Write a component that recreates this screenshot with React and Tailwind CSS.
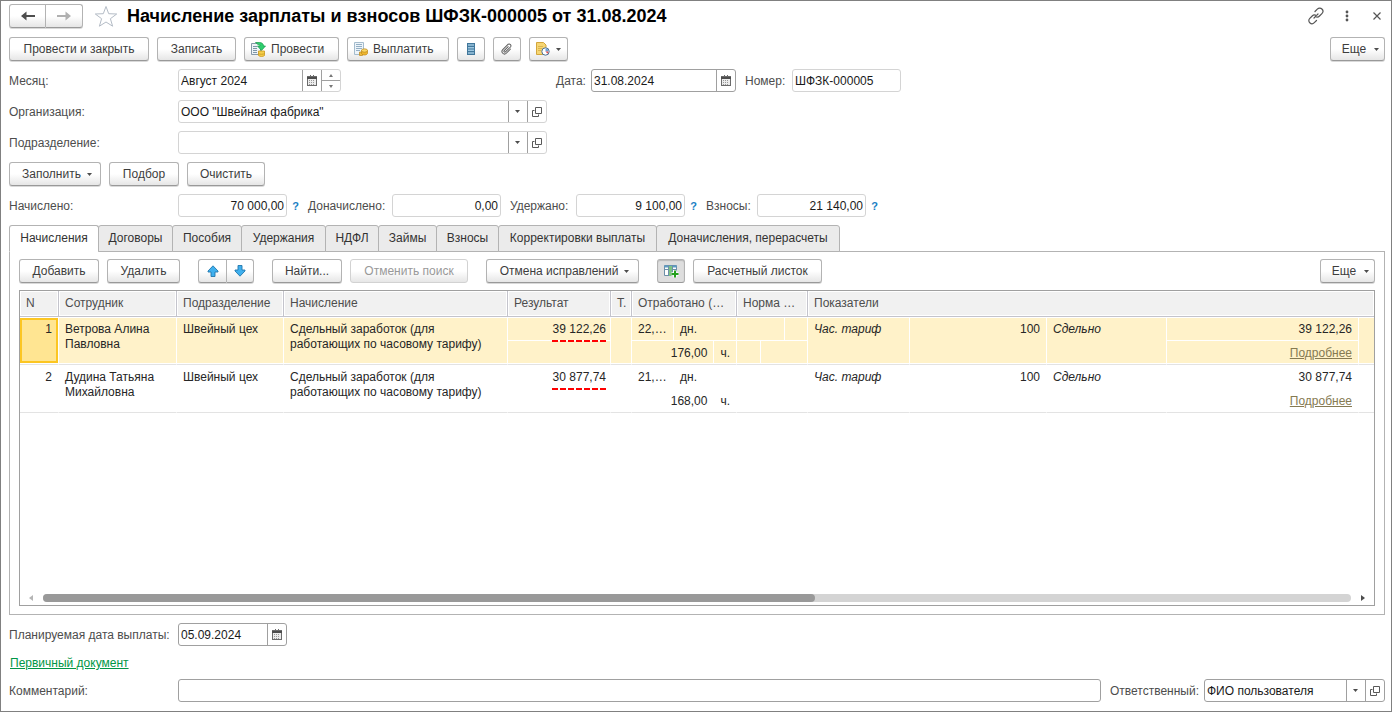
import React, { useState } from 'react';
import clsx from 'clsx';

const tabs = [
  { id: 'accruals', label: 'Начисления', width: 'w-[90px]' },
  { id: 'contracts', label: 'Договоры', width: 'w-[75px]' },
  { id: 'benefits', label: 'Пособия', width: 'w-[70px]' },
  { id: 'deductions', label: 'Удержания', width: 'w-[85px]' },
  { id: 'ndfl', label: 'НДФЛ', width: 'w-[54px]' },
  { id: 'loans', label: 'Займы', width: 'w-[59px]' },
  { id: 'fees', label: 'Взносы', width: 'w-[63px]' },
  { id: 'corrections', label: 'Корректировки выплаты', width: 'w-[159px]' },
  { id: 'recalc', label: 'Доначисления, перерасчеты', width: 'w-[184px]' }
];

const rows = [
  {
    id: 1,
    employee: 'Ветрова Алина Павловна',
    department: 'Швейный цех',
    accrual: 'Сдельный заработок (для работающих по часовому тарифу)',
    result: '39 122,26',
    days: '22,…',
    hours: '176,00',
    rate: '100'
  },
  {
    id: 2,
    employee: 'Дудина Татьяна Михайловна',
    department: 'Швейный цех',
    accrual: 'Сдельный заработок (для работающих по часовому тарифу)',
    result: '30 877,74',
    days: '21,…',
    hours: '168,00',
    rate: '100'
  }
];

/* Icons */
const CaretIcon = () => (
  <svg width="5" height="3" viewBox="0 0 5 3" className="shrink-0">
    <path d="M0 0h5L2.5 3z" fill="#4d4d4d" />
  </svg>
);

const ArrowIcon = ({ color, flip }) => (
  <svg width="14" height="10" viewBox="0 0 14 10" className={flip ? 'rotate-180' : ''}>
    <path d="M0 5L5.5 0.5V4H14V6H5.5V9.5z" fill={color} />
  </svg>
);

const StarIcon = () => (
  <svg width="24" height="23" viewBox="0 0 24 23" fill="none" stroke="#b4bcc6">
    <path d="M12 1.5l2.7 7.2 8 .3-6.3 4.7 2.2 7.5L12 17l-6.6 4.2 2.2-7.5L1.3 9l8-.3z" />
  </svg>
);

const LinkIcon = () => (
  <svg width="18" height="18" viewBox="0 0 18 18" fill="none" stroke="#555" strokeWidth="1.2" strokeLinecap="round">
    <path d="M8 4.5l2.3-2.3c1.4-1.4 3.4-1.4 4.6-.2 1.3 1.3 1.3 3.3 0 4.600L12.500 9c-1.200 1.200-2.800 1.300-4 .4" />
    <path d="M9.500 13.500l-2.200 2.200c-1.300 1.300-3.200 1.300-4.500.1-1.300-1.300-1.300-3.200 0-4.500L5.200 9c1.200-1.200 2.800-1.300 4-.4" />
    <path d="M7 11l4-4" strokeDasharray="2 2" />
  </svg>
);

const CalendarIcon = () => (
  <svg width="10" height="11" viewBox="0 0 10 11">
    <path d="M1 1h2V0h1v1h2V0h1v1h3v10H0V1z" fill="#6b6b6b" />
    <path d="M0 2h10v2H0z" fill="#4d4d4d" />
    <path d="M1 4h8v6H1z" fill="#ececec" />
    <path d="M2 5.500h6M2 7.500h6M2 9.500h6" stroke="#999" strokeDasharray="1 1" />
  </svg>
);

const OpenIcon = () => (
  <svg width="10" height="10" viewBox="0 0 10 10" fill="none" stroke="#595959">
    <path d="M3.500 .5h6v6h-6z" />
    <path d="M2.500 3.500h-2v6h6v-2" />
  </svg>
);

const PostIcon = () => (
  <svg width="15" height="15" viewBox="0 0 15 15" className="shrink-0">
    <path d="M.5 1.500h9v11h-9z" fill="#eef3f7" stroke="#8699a8" />
    <path d="M2 4.500h4M2 6.500h4M2 8.500h4M2 10.500h4" stroke="#7d96a8" />
    <path d="M4.500 .5h4c2.500 0 4 1.500 4 3.500h2L10.500 8.500 6.500 4h2.500c0-1-1-1.500-2-1.500z" fill="#2fce6e" stroke="#159a4b" strokeWidth=".7" />
    <path d="M7.500 9v4.500c1 1.300 5 1.300 6 0V9z" fill="#f5cf4c" stroke="#c9971c" strokeWidth=".8" />
    <path d="M7.500 11.500c1 1 5 1 6 0" fill="none" stroke="#c9971c" strokeWidth=".8" />
  </svg>
);

const PayIcon = () => (
  <svg width="14" height="14" viewBox="0 0 14 14" className="shrink-0">
    <path d="M.5 .5h9v12h-9z" fill="#edf4fa" stroke="#a5bccd" />
    <path d="M2 2.500h6M2 4.500h6M2 6.500h6M2 8.500h4" stroke="#93afc4" />
    <path d="M5.500 10h3v3.500h-3z" fill="#f0bd3c" stroke="#bd861a" strokeWidth=".7" />
    <path d="M7.500 8.500v3c1 2 5 2 6 0v-3z" fill="#eeb62f" stroke="#bd861a" strokeWidth=".7" />
    <ellipse cx="10.500" cy="8.500" rx="3" ry="1.700" fill="#f9d768" stroke="#bd861a" strokeWidth=".7" />
  </svg>
);

const RegisterIcon = () => (
  <svg width="8" height="12" viewBox="0 0 8 12">
    <path d="M0 0h8v12H0z" fill="#41779b" />
    <path d="M1 2h6M1 4.700h6M1 7.300h6M1 10h6" stroke="#9cc6e0" strokeWidth="1.500" />
  </svg>
);

const ClipIcon = () => (
  <svg width="14" height="14" viewBox="0 0 14 14" fill="none" stroke="#5c5c5c" strokeLinecap="round">
    <g transform="rotate(45 7 7)">
      <path d="M9.500 4.500v6a2.500 2.500 0 0 1-5 0V2.800a1.800 1.800 0 0 1 3.500 0v7.400a.9.9 0 0 1-1.800 0V4.500" />
    </g>
  </svg>
);

const ReportIcon = () => (
  <svg width="14" height="14" viewBox="0 0 14 14">
    <path d="M.5 .5h7l2.500 2.500v9.500H.5z" fill="#f6d673" stroke="#d3a63c" />
    <path d="M2 4.500h5M2 6.500h4M2 8.500h3" stroke="#dcb550" />
    <circle cx="9.500" cy="9.500" r="3.700" fill="#fff" stroke="#4a6f94" />
    <path d="M9.500 9.500V6.500a3 3 0 0 1 3 3z" fill="#6da3d6" />
    <path d="M9.500 9.500h3a3 3 0 0 1-1 2.200z" fill="#e04f4f" />
  </svg>
);

const MoveIcon = ({ flip }) => (
  <svg width="12" height="12" viewBox="0 0 12 12" className={flip ? 'rotate-180' : ''}>
    <path d="M6 .8L11 6v1H8v4.500H4V7H1V6z" fill="#3fb0ee" stroke="#2177ad" strokeWidth=".9" />
  </svg>
);

const ColumnsIcon = () => (
  <svg width="15" height="13" viewBox="0 0 15 13">
    <path d="M.5 .5h12v10H.5z" fill="#fff" stroke="#6c8fa8" />
    <path d="M.5 1.500h12" stroke="#5b9bc4" strokeWidth="2" />
    <path d="M4 1h5v10H4z" fill="#7cc383" />
    <path d="M4.500 0v11M8.500 0v11M.5 4.500H4M9 4.500h3" stroke="#6c8fa8" />
    <path d="M11 5.500v7M7.500 9h7" stroke="#fff" strokeWidth="3.500" />
    <path d="M11 5.500v7M7.500 9h7" stroke="#25a01c" strokeWidth="2" />
  </svg>
);

/* Controls */
const Button = ({ width, className, align = 'justify-center', pressed, children, ...props }) => (
  <button
    type="button"
    aria-pressed={pressed}
    className={clsx(
      'flex h-6 shrink-0 items-center rounded-[3px] border border-[#b3b3b3] border-b-[#999] whitespace-nowrap text-[#3d3d3d] disabled:border-[#d2d2d2] disabled:text-[#999] disabled:shadow-none',
      pressed
        ? 'bg-[#dedede] shadow-[inset_0_1px_1px_#bbb]'
        : 'bg-linear-to-b from-white from-50% to-[#e6e6e6] shadow-[0_1px_0_#d9d9d9]',
      align,
      width,
      className
    )}
    {...props}
  >
    {children}
  </button>
);

const MoreButton = () => (
  <Button width="w-[55px]" className="ml-auto gap-2 pl-1.5">
    Еще <CaretIcon />
  </Button>
);

const FieldButton = ({ label, children }) => (
  <button
    type="button"
    aria-label={label}
    className="flex w-[19px] shrink-0 items-center justify-center border-l border-[#a0a0a0] pr-px"
  >
    {children}
  </button>
);

const Field = ({ id, value = '', width, dark, align, readOnly, children }) => (
  <div
    className={clsx(
      'flex h-[23px] overflow-hidden rounded-[3px] border bg-white',
      dark ? 'border-[#a0a0a0]' : 'border-[#d4d4d4]',
      width
    )}
  >
    <input
      id={id}
      type="text"
      defaultValue={value}
      readOnly={readOnly}
      className={clsx('min-w-0 flex-1 px-0.5 pt-0.5 text-[#1a1a1a] outline-none', align === 'right' && 'text-right')}
    />
    {children}
  </div>
);

const Label = ({ htmlFor, width, children }) => (
  <label htmlFor={htmlFor} className={clsx('shrink-0 pt-0.5 whitespace-nowrap', width)}>
    {children}
  </label>
);

const Hint = () => (
  <button type="button" aria-label="Справка" className="w-[21px] pt-px pr-1 text-center text-[11px] font-bold text-[#1a7fc4]">
    ?
  </button>
);

const RefButtons = () => (
  <>
    <FieldButton label="Выбрать из списка"><CaretIcon /></FieldButton>
    <FieldButton label="Открыть"><OpenIcon /></FieldButton>
  </>
);

const HeadCell = ({ children, ...props }) => (
  <th
    className="overflow-hidden border-r border-b border-[#c4c4cc] bg-[#f1f1f1] px-1.5 text-left font-normal whitespace-nowrap shadow-[inset_0_0_0_1px_#fff] last:border-r-0"
    {...props}
  >
    {children}
  </th>
);

const AccrualRow = ({ row, selected, onSelect }) => {
  const cell = 'border-r border-b border-r-white border-b-[#e3e3e3] p-0 align-top last:border-r-0';
  const fill = clsx('my-px h-[45px] px-1.5 pt-1', selected && 'bg-[#fff2c9]');
  const half = clsx('flex', selected ? 'bg-[#fff2c9]' : 'bg-white');
  return (
    <tr onClick={onSelect}>
      <td className={cell}>
        <div
          className={clsx(
            'my-px h-[45px] text-right',
            selected ? 'border-2 border-[#fcc622] bg-[#ffe592] px-1 pt-0.5' : 'px-1.5 pt-1'
          )}
        >
          {row.id}
        </div>
      </td>
      <td className={cell}><div className={fill}>{row.employee}</div></td>
      <td className={cell}><div className={fill}>{row.department}</div></td>
      <td className={cell}><div className={fill}>{row.accrual}</div></td>
      <td className={cell}>
        <div className="my-px flex h-[45px] flex-col gap-px">
          <div className={clsx(half, 'h-[22px] flex-col items-end px-1 pt-1')}>
            <span>{row.result}</span>
            <span className="mt-[3px] h-0.5 w-[54px] shrink-0 bg-[repeating-linear-gradient(90deg,#f00_0_6px,transparent_6px_8px)]" />
          </div>
          {/* transparent on plain rows so the red underline stays whole */}
          <div className={clsx('-z-10 h-[22px]', selected && 'bg-[#fff2c9]')} />
        </div>
      </td>
      <td className={cell}><div className={fill} /></td>
      <td className={cell}>
        <div className="my-px flex h-[45px] flex-col gap-px">
          <div className={clsx(half, 'h-[22px]')}>
            <span className="w-[42px] border-r border-white px-1.5 pt-1">{row.days}</span>
            <span className="px-1.5 pt-1">дн.</span>
          </div>
          <div className={clsx(half, 'h-[22px]')}>
            <span className="w-[84px] border-r border-white px-1.5 pt-[5px] text-right">{row.hours}</span>
            <span className="px-1.5 pt-[5px]">ч.</span>
          </div>
        </div>
      </td>
      <td className={cell}>
        <div className="my-px flex h-[45px] flex-col gap-px">
          <div className={clsx(half, 'h-[22px]')}><span className="w-12 border-r border-white" /></div>
          <div className={clsx(half, 'h-[22px]')}><span className="w-6 border-r border-white" /></div>
        </div>
      </td>
      <td className={cell}><div className={clsx(fill, 'italic')}>Час. тариф</div></td>
      <td className={cell}><div className={clsx(fill, 'text-right')}>{row.rate}</div></td>
      <td className={cell}><div className={clsx(fill, 'italic')}>Сдельно</div></td>
      <td className={cell}>
        <div className="my-px flex h-[45px] flex-col gap-px">
          <div className={clsx(half, 'h-[22px] justify-end px-1.5 pt-1')}>{row.result}</div>
          <div className={clsx(half, 'h-[22px] justify-end px-1.5 pt-[5px]')}>
            <a href="#details" className="text-[#857a52] underline">Подробнее</a>
          </div>
        </div>
      </td>
      <td className={cell}><div className={fill} /></td>
    </tr>
  );
};

const App = () => {
  const [activeTab, setActiveTab] = useState('accruals');
  const [selectedRow, setSelectedRow] = useState(1);

  return (
    <div className="flex min-h-screen flex-col gap-2 border border-[#808080] bg-white pt-0.5 pr-1.5 pb-[9px] pl-2 font-['Liberation_Sans',Arial,sans-serif] text-[12px] leading-[15px] text-[#4d4d4d]">
      {/* Title */}
      <header className="flex h-[26px] items-center">
        <div className="flex">
          <Button width="w-[37px]" className="rounded-r-none" aria-label="Назад"><ArrowIcon color="#4d4d4d" /></Button>
          <Button width="w-[37px]" className="rounded-l-none border-l-0" aria-label="Вперед"><ArrowIcon color="#b0b0b0" flip /></Button>
        </div>
        <button type="button" aria-label="В избранное" className="ml-[11px]"><StarIcon /></button>
        <h1 className="ml-[9px] text-[18px] leading-6 font-bold whitespace-nowrap text-black">
          Начисление зарплаты и взносов ШФЗК-000005 от 31.08.2024
        </h1>
        <div className="ml-auto flex items-center gap-5">
          <button type="button" aria-label="Получить ссылку"><LinkIcon /></button>
          <button type="button" aria-label="Меню">
            <svg width="4" height="12" viewBox="0 0 4 12" fill="#555">
              <circle cx="2" cy="2" r="1.400" /><circle cx="2" cy="6" r="1.400" /><circle cx="2" cy="10" r="1.400" />
            </svg>
          </button>
          <button type="button" aria-label="Закрыть" className="mx-1">
            <svg width="8" height="8" viewBox="0 0 8 8" stroke="#555" strokeWidth="1.200">
              <path d="M.5 .5l7 7M7.500 .5l-7 7" />
            </svg>
          </button>
        </div>
      </header>

      {/* Commands */}
      <div className="flex gap-2">
        <Button width="w-[140px]">Провести и закрыть</Button>
        <Button width="w-[79px]">Записать</Button>
        <Button width="w-[95px]" align="justify-start" className="gap-[5px] pl-1.5"><PostIcon /> Провести</Button>
        <Button width="w-[102px]" align="justify-start" className="gap-[5px] pl-1.5"><PayIcon /> Выплатить</Button>
        <Button width="w-7" aria-label="Движения документа"><RegisterIcon /></Button>
        <Button width="w-7" aria-label="Файлы"><ClipIcon /></Button>
        <Button width="w-[39px]" className="gap-1.5" aria-label="Отчеты"><ReportIcon /><CaretIcon /></Button>
        <MoreButton />
      </div>

      {/* Document fields */}
      <div className="flex items-center">
        <div className="flex w-[547px] items-center">
          <Label htmlFor="month" width="w-[169px]">Месяц:</Label>
          <Field id="month" value="Август 2024" width="w-[163px]">
            <FieldButton label="Выбрать месяц"><CalendarIcon /></FieldButton>
            <div className="flex w-[19px] flex-col border-l border-[#a0a0a0]">
              <button type="button" aria-label="Следующий месяц" className="flex flex-1 items-center justify-center border-b border-[#a0a0a0]">
                <svg width="4" height="3" viewBox="0 0 4 3"><path d="M0 3h4L2 0z" fill="#777" /></svg>
              </button>
              <button type="button" aria-label="Предыдущий месяц" className="flex flex-1 items-center justify-center">
                <svg width="4" height="3" viewBox="0 0 4 3"><path d="M0 0h4L2 3z" fill="#777" /></svg>
              </button>
            </div>
          </Field>
        </div>
        <Label htmlFor="date" width="w-[35px]">Дата:</Label>
        <Field id="date" value="31.08.2024" width="w-[145px]" dark>
          <FieldButton label="Выбрать дату"><CalendarIcon /></FieldButton>
        </Field>
        <div className="ml-[9px] flex items-center">
          <Label htmlFor="number" width="w-[47px]">Номер:</Label>
          <Field id="number" value="ШФЗК-000005" width="w-[109px]" />
        </div>
      </div>
      <div className="flex items-center">
        <Label htmlFor="org" width="w-[169px]">Организация:</Label>
        <Field id="org" value={'ООО "Швейная фабрика"'} width="w-[369px]"><RefButtons /></Field>
      </div>
      <div className="flex items-center">
        <Label htmlFor="dept" width="w-[169px]">Подразделение:</Label>
        <Field id="dept" width="w-[369px]"><RefButtons /></Field>
      </div>

      <div className="flex gap-2">
        <Button width="w-[92px]" className="gap-1.5 pl-1">Заполнить <CaretIcon /></Button>
        <Button width="w-[70px]">Подбор</Button>
        <Button width="w-[78px]">Очистить</Button>
      </div>

      {/* Totals */}
      <div className="flex items-center">
        <Label htmlFor="accrued" width="w-[169px]">Начислено:</Label>
        <Field id="accrued" value="70 000,00" width="w-[109px]" align="right" readOnly />
        <Hint />
        <Label htmlFor="extra" width="w-[84px]">Доначислено:</Label>
        <Field id="extra" value="0,00" width="w-[109px]" align="right" readOnly />
        <div className="ml-[9px] flex items-center">
          <Label htmlFor="withheld" width="w-[66px]">Удержано:</Label>
          <Field id="withheld" value="9 100,00" width="w-[109px]" align="right" readOnly />
          <Hint />
          <Label htmlFor="contributions" width="w-[51px]">Взносы:</Label>
          <Field id="contributions" value="21 140,00" width="w-[109px]" align="right" readOnly />
          <Hint />
        </div>
      </div>

      {/* Tabs */}
      <div className="flex flex-1 flex-col">
        <div role="tablist" className="z-10 -mb-px flex">
          {tabs.map(tab => (
            <button
              key={tab.id}
              type="button"
              role="tab"
              aria-selected={activeTab === tab.id}
              onClick={() => setActiveTab(tab.id)}
              className={clsx(
                '-mr-px h-[27px] rounded-t-[3px] border border-[#b3b3b3] whitespace-nowrap text-[#333] last:mr-0',
                tab.width,
                activeTab === tab.id ? 'border-b-white bg-white' : 'bg-[#ebebeb]'
              )}
            >
              {tab.label}
            </button>
          ))}
        </div>

        <div role="tabpanel" className="flex flex-1 flex-col gap-[7px] border border-[#b3b3b3] px-[9px] pt-[7px] pb-2">
          <div className="flex">
            <div className="flex gap-2">
              <Button width="w-[80px]">Добавить</Button>
              <Button width="w-[73px]">Удалить</Button>
            </div>
            <div className="ml-[18px] flex">
              <Button width="w-[29px]" className="rounded-r-none" aria-label="Переместить вверх"><MoveIcon /></Button>
              <Button width="w-[27px]" className="rounded-l-none border-l-0" aria-label="Переместить вниз"><MoveIcon flip /></Button>
            </div>
            <div className="ml-[18px] flex gap-2">
              <Button width="w-[70px]">Найти...</Button>
              <Button width="w-[118px]" disabled>Отменить поиск</Button>
            </div>
            <Button width="w-[153px]" className="ml-[18px] gap-1.5 pl-1">Отмена исправлений <CaretIcon /></Button>
            <div className="ml-[18px] flex gap-2">
              <Button width="w-7" pressed aria-label="Показатели в колонках"><ColumnsIcon /></Button>
              <Button width="w-[129px]">Расчетный листок</Button>
            </div>
            <MoreButton />
          </div>

          <div className="flex flex-1 flex-col border border-[#a0a0a0]">
            <table className="isolate w-full table-fixed border-separate border-spacing-0">
              <colgroup>
                <col className="w-[39px]" />
                <col className="w-[118px]" />
                <col className="w-[107px]" />
                <col className="w-[224px]" />
                <col className="w-[103px]" />
                <col className="w-[21px]" />
                <col className="w-[105px]" />
                <col className="w-[71px]" />
                <col className="w-[102px]" />
                <col className="w-[137px]" />
                <col className="w-[120px]" />
                <col className="w-[192px]" />
                <col />
              </colgroup>
              <thead>
                <tr className="h-[26px]">
                  <HeadCell>N</HeadCell>
                  <HeadCell>Сотрудник</HeadCell>
                  <HeadCell>Подразделение</HeadCell>
                  <HeadCell>Начисление</HeadCell>
                  <HeadCell>Результат</HeadCell>
                  <HeadCell>Т.</HeadCell>
                  <HeadCell>Отработано (…</HeadCell>
                  <HeadCell>Норма …</HeadCell>
                  <HeadCell colSpan={5}>Показатели</HeadCell>
                </tr>
              </thead>
              <tbody className="text-[#262626]">
                {rows.map(row => (
                  <AccrualRow
                    key={row.id}
                    row={row}
                    selected={selectedRow === row.id}
                    onSelect={() => setSelectedRow(row.id)}
                  />
                ))}
              </tbody>
            </table>

            {/* Horizontal scroll */}
            <div className="mt-auto flex items-center gap-2.5 px-2 pb-[3px]">
              <svg width="5" height="6" viewBox="0 0 5 6"><path d="M5 0v6L1 3z" fill="#b5b5b5" /></svg>
              <div className="h-2 flex-1 rounded-full bg-[#d4d4d4]">
                <div className="h-2 w-[59%] rounded-full bg-[#999]" />
              </div>
              <svg width="5" height="6" viewBox="0 0 5 6"><path d="M0 0v6l4-3z" fill="#4d4d4d" /></svg>
            </div>
          </div>
        </div>
      </div>

      {/* Footer */}
      <div className="flex items-center">
        <Label htmlFor="paydate" width="w-[169px]">Планируемая дата выплаты:</Label>
        <Field id="paydate" value="05.09.2024" width="w-[109px]" dark>
          <FieldButton label="Выбрать дату"><CalendarIcon /></FieldButton>
        </Field>
      </div>
      <div className="flex h-[17px] items-end">
        <a href="#source" className="ml-px text-[#009646] underline">Первичный документ</a>
      </div>
      <div className="flex items-center">
        <Label htmlFor="comment" width="w-[169px]">Комментарий:</Label>
        <Field id="comment" width="flex-1" dark />
        <div className="ml-[9px] flex items-center">
          <Label htmlFor="responsible" width="w-[94px]">Ответственный:</Label>
          <Field id="responsible" value="ФИО пользователя" width="w-[181px]" dark><RefButtons /></Field>
        </div>
      </div>
    </div>
  );
};

export default App;
